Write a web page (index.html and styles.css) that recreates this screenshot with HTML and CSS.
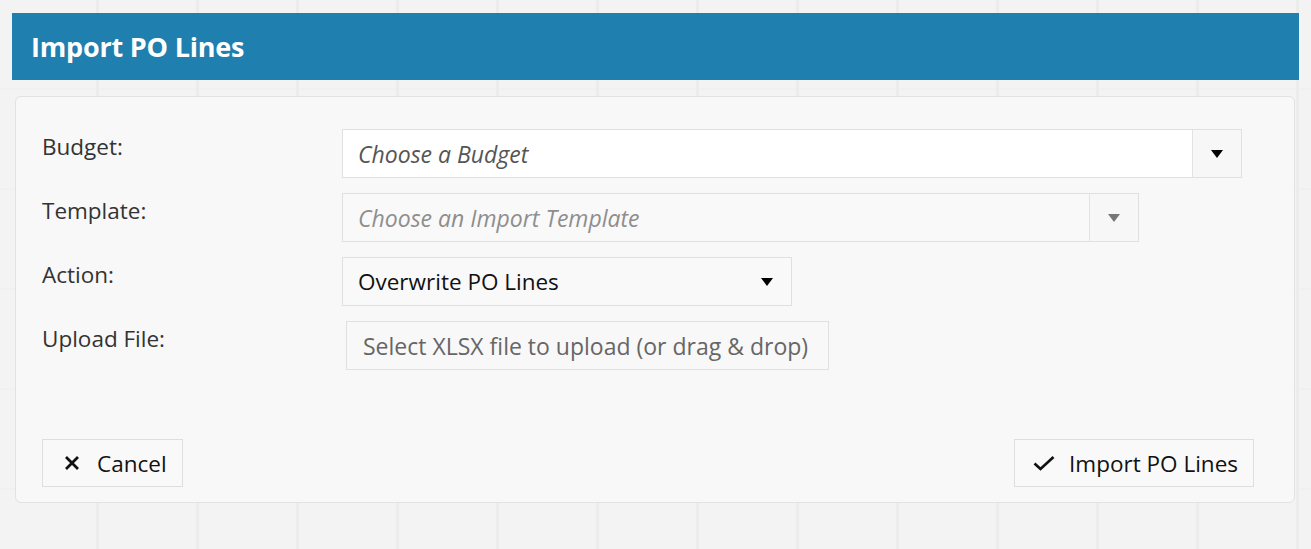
FILE: index.html
```html
<!DOCTYPE html>
<html lang="en">

<head>
    <meta charset="UTF-8">
    <meta name="viewport" content="width=device-width, initial-scale=1.0">
    <title>Import PO Lines</title>
    <link rel="stylesheet" href="styles.css">
</head>

<body>

    <div class="dialog-title">
        <h1>Import PO Lines</h1>
    </div>

    <div class="dialog-body">
        <div class="form-grid">
            <label class="field-label">Budget:</label>
            <div class="combo budget">
                <span class="combo-text placeholder">Choose a Budget</span>
                <span class="combo-btn"><span class="caret"></span></span>
            </div>

            <label class="field-label">Template:</label>
            <div class="combo template disabled">
                <span class="combo-text placeholder">Choose an Import Template</span>
                <span class="combo-btn"><span class="caret"></span></span>
            </div>

            <label class="field-label">Action:</label>
            <div class="select action">
                <span class="combo-text">Overwrite PO Lines</span>
                <span class="caret"></span>
            </div>

            <label class="field-label">Upload File:</label>
            <div class="upload">
                <span>Select XLSX file to upload (or drag &amp; drop)</span>
            </div>
        </div>

        <!-- 底部按钮 -->
        <div class="actions">
            <button class="btn">
                <svg class="btn-icon" width="22" height="16" viewBox="0 0 22 16">
                    <path d="M5 2 L17 14 M17 2 L5 14" stroke="#111" stroke-width="2.8" fill="none" />
                </svg>
                Cancel
            </button>
            <button class="btn">
                <svg class="btn-icon" width="22" height="16" viewBox="0 0 22 16">
                    <path d="M1.5 8.5 L7.5 14 L20.5 2" stroke="#111" stroke-width="2.7" fill="none" />
                </svg>
                Import PO Lines
            </button>
        </div>
    </div>

</body>

</html>
```

FILE: styles.css
```css
* {
    margin: 0;
    padding: 0;
    box-sizing: border-box;
}

body {
    font-family: "Open Sans", "Noto Sans", sans-serif;
    color: #222;
    background-color: #f3f3f3;
    background-image:
        linear-gradient(to right, transparent 96px, #ececec 96px, #ececec 99px, transparent 99px),
        linear-gradient(to bottom, transparent 88px, #f0f0f0 88px, #f0f0f0 90px, transparent 90px);
    background-size: 100px 100px;
    height: 549px;
    overflow: hidden;
    padding-top: 13px;
}

.dialog-title {
    margin: 0 12px 0 12px;
    height: 67px;
    background: #1f7fae;
    display: flex;
    align-items: center;
    padding-left: 19px;
}

.dialog-title h1 {
    color: #fff;
    font-size: 27px;
    font-weight: 700;
    letter-spacing: -0.2px;
}

.dialog-body {
    margin: 16px 16px 0 15px;
    background: #f8f8f8;
    border: 1px solid #e2e2e2;
    border-radius: 6px;
    padding: 32px 40px 15px 26px;
}

.form-grid {
    display: grid;
    grid-template-columns: 300px 1fr;
    row-gap: 15px;
}

.field-label {
    font-size: 22.5px;
    color: #333;
    padding-top: 2px;
}

.combo,
.select,
.upload {
    height: 49px;
    border: 1px solid #e0e0e0;
    display: flex;
    align-items: center;
    font-size: 22.5px;
}

.combo-text {
    flex: 1;
    padding-left: 15px;
}

.placeholder {
    font-style: italic;
    color: #555;
    font-size: 23px;
}

.combo {
    background: #fff;
}

.budget {
    width: 900px;
}

.template {
    width: 797px;
}

.combo.disabled {
    background: #f9f9f9;
}

.combo.disabled .placeholder {
    color: #8e8e8e;
}

.combo-btn {
    width: 49px;
    height: 100%;
    border-left: 1px solid #e3e3e3;
    background: #f7f7f7;
    display: flex;
    align-items: center;
    justify-content: center;
}

.caret {
    width: 0;
    height: 0;
    border-left: 6px solid transparent;
    border-right: 6px solid transparent;
    border-top: 8px solid #000;
}

.disabled .caret {
    border-top-color: #777;
}

.select {
    width: 450px;
    background: #f9f9f9;
    color: #111;
    padding-right: 18px;
}

.upload {
    width: 483px;
    margin-left: 4px;
    background: #f8f8f8;
    color: #666;
    padding-left: 16px;
    font-size: 23px;
}

.actions {
    display: flex;
    justify-content: space-between;
    margin-top: 69px;
}

.btn {
    height: 48px;
    padding: 0 15px 0 18px;
    border: 1px solid #dedede;
    background: #f9f9f9;
    font-family: inherit;
    font-size: 22.5px;
    color: #111;
    display: flex;
    align-items: center;
    gap: 14px;
}

.btn-icon {
    flex: none;
}
```
